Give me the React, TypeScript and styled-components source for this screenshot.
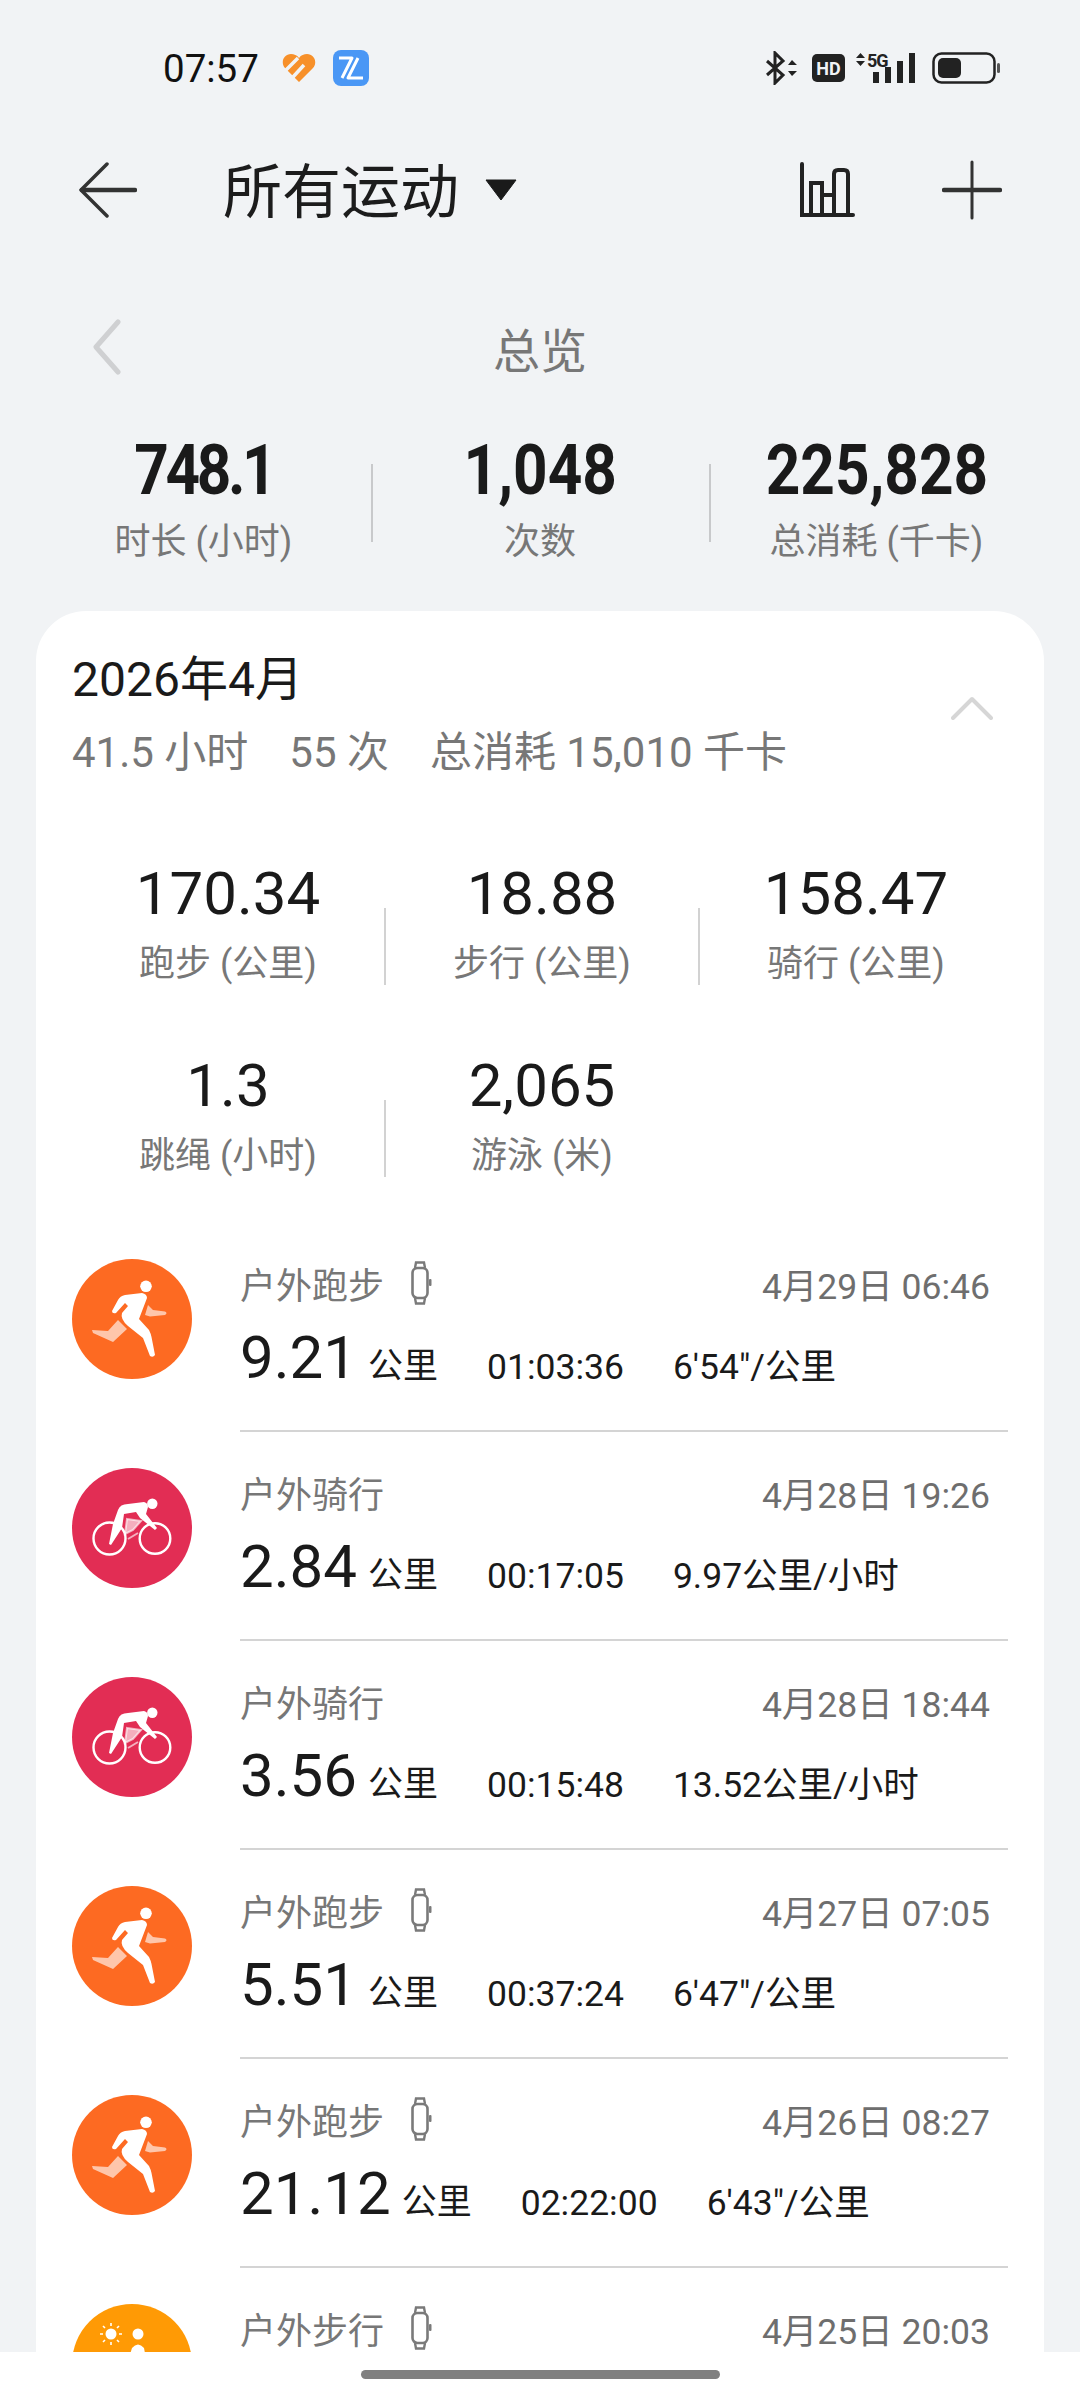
import React from "react";
import styled, { createGlobalStyle } from "styled-components";

type Kind = "run" | "ride" | "walk";

interface Workout {
  kind: Kind;
  title: string;
  date: string;
  distance?: string;
  duration?: string;
  pace?: string;
  watch: boolean;
}

const workouts: Workout[] = [
  { kind: "run", title: "户外跑步", date: "4月29日 06:46", distance: "9.21", duration: "01:03:36", pace: `6'54"/公里`, watch: true },
  { kind: "ride", title: "户外骑行", date: "4月28日 19:26", distance: "2.84", duration: "00:17:05", pace: "9.97公里/小时", watch: false },
  { kind: "ride", title: "户外骑行", date: "4月28日 18:44", distance: "3.56", duration: "00:15:48", pace: "13.52公里/小时", watch: false },
  { kind: "run", title: "户外跑步", date: "4月27日 07:05", distance: "5.51", duration: "00:37:24", pace: `6'47"/公里`, watch: true },
  { kind: "run", title: "户外跑步", date: "4月26日 08:27", distance: "21.12", duration: "02:22:00", pace: `6'43"/公里`, watch: true },
  // last row is cut by the nav bar, only its first line shows
  { kind: "walk", title: "户外步行", date: "4月25日 20:03", watch: true },
];

const monthStats = [
  { value: "170.34", label: "跑步 (公里)" },
  { value: "18.88", label: "步行 (公里)" },
  { value: "158.47", label: "骑行 (公里)" },
  { value: "1.3", label: "跳绳 (小时)" },
  { value: "2,065", label: "游泳 (米)" },
];

const totals = [
  { value: "748.1", label: "时长 (小时)", tight: true },
  { value: "1,048", label: "次数", tight: false },
  { value: "225,828", label: "总消耗 (千卡)", tight: false },
];

const kindColors: Record<Kind, string> = {
  run: "#fd6a22",
  ride: "#e22d54",
  walk: "#ff9a05",
};

const GlobalStyle = createGlobalStyle`
  html, body {
    margin: 0;
    padding: 0;
    background: #f1f3f5;
  }
  body {
    font-family: Roboto, "Noto Sans CJK SC", sans-serif;
    color: #1a1a1a;
  }
`;

const Page = styled.div`
  width: 1080px;
  height: 2400px;
  display: flex;
  flex-direction: column;
  overflow: hidden;
  background: #f1f3f5;
`;

const StatusBar = styled.div`
  height: 136px;
  flex: none;
  display: flex;
  align-items: center;
  padding: 0 80px 0 163px;
  box-sizing: border-box;
`;

const Clock = styled.span`
  font-size: 38.5px;
  color: #111;
  margin-right: 23px;
`;

const StatusIcons = styled.div`
  margin-left: auto;
  display: flex;
  align-items: center;
`;

const StatusIcon = styled.svg<{ $gap?: number }>`
  display: block;
  flex: none;
  margin-left: ${(p) => p.$gap ?? 0}px;
`;

const Header = styled.div`
  height: 108px;
  flex: none;
  display: flex;
  align-items: center;
  padding: 0 78px;
  box-sizing: border-box;
`;

const HeaderTitle = styled.div`
  font-size: 59px;
  line-height: 70px;
  margin: 5px 0 0 86px;
  color: #1c1c1c;
`;

const Caret = styled.svg`
  margin-left: 26px;
  flex: none;
`;

const HeaderActions = styled.div`
  margin-left: auto;
  display: flex;
  align-items: center;
  gap: 87px;
`;

const OverviewBar = styled.div`
  height: 60px;
  margin-top: 73px;
  flex: none;
  display: flex;
  align-items: center;
  justify-content: center;
  position: relative;
  font-size: 47px;
  color: #777;
`;

const PrevButton = styled.svg`
  position: absolute;
  left: 90px;
  top: 2px;
`;

const Totals = styled.div`
  display: grid;
  grid-template-columns: 335px 338px 335px;
  margin: 58px 36px 0;
  flex: none;
`;

const TotalCell = styled.div<{ $divider: boolean }>`
  position: relative;
  display: flex;
  flex-direction: column;
  align-items: center;
  &::before {
    content: "";
    display: ${(p) => (p.$divider ? "block" : "none")};
    position: absolute;
    left: 0;
    top: 29px;
    width: 2px;
    height: 78px;
    background: #c8c9cb;
  }
`;

const TotalValue = styled.div<{ $tight: boolean }>`
  font-size: 71px;
  line-height: 70px;
  font-weight: 700;
  color: #1a1a1a;
  letter-spacing: ${(p) => (p.$tight ? "-4px" : "0")};
  transform: scaleX(0.85);
`;

const TotalLabel = styled.div`
  font-size: 36px;
  line-height: 48px;
  margin-top: 13px;
  color: #777;
`;

const Card = styled.div`
  flex: 1;
  min-height: 0;
  margin: 45px 36px 0;
  background: #fff;
  border-radius: 50px 50px 0 0;
  overflow: hidden;
`;

const MonthHead = styled.div`
  display: flex;
  align-items: center;
  justify-content: space-between;
  padding: 39px 51px 0 36px;
`;

const MonthTitle = styled.div`
  font-size: 48px;
  line-height: 60px;
  color: #1a1a1a;
`;

const MonthSummary = styled.div`
  display: flex;
  gap: 41px;
  margin-top: 17px;
  font-size: 42px;
  line-height: 52px;
  color: #777;
`;

const CollapseIcon = styled.svg`
  flex: none;
  margin-bottom: 14px;
`;

const StatsGrid = styled.div`
  display: grid;
  grid-template-columns: repeat(3, 314px);
  row-gap: 63px;
  margin: 80px 0 0 35px;
`;

const StatCell = styled.div<{ $divider: boolean }>`
  position: relative;
  display: flex;
  flex-direction: column;
  align-items: center;
  &::before {
    content: "";
    display: ${(p) => (p.$divider ? "block" : "none")};
    position: absolute;
    left: -1px;
    top: 49px;
    width: 2px;
    height: 77px;
    background: #d2d2d2;
  }
`;

const StatValue = styled.div`
  font-size: 60px;
  line-height: 70px;
  color: #1a1a1a;
`;

const StatLabel = styled.div`
  font-size: 36px;
  line-height: 48px;
  margin-top: 11px;
  color: #777;
`;

const WorkoutList = styled.div`
  margin-top: 43px;
`;

const Row = styled.div`
  height: 209px;
  display: flex;
  padding-left: 36px;
  box-sizing: border-box;
`;

const Badge = styled.svg`
  width: 120px;
  height: 120px;
  flex: none;
  margin-top: 36px;
`;

const RowBody = styled.div<{ $first: boolean }>`
  flex: 1;
  margin: 0 36px 0 48px;
  padding: 38px 18px 0 0;
  border-top: ${(p) => (p.$first ? "none" : "2px solid #d4d4d4")};
  margin-top: ${(p) => (p.$first ? "0" : "-2px")};
`;

const RowTop = styled.div`
  display: flex;
  align-items: center;
  height: 44px;
  color: #777;
`;

const RowTitle = styled.span`
  font-size: 36px;
`;

const WatchIcon = styled.svg`
  margin-left: 26px;
  flex: none;
`;

const RowDate = styled.span`
  margin-left: auto;
  font-size: 35.5px;
  color: #6e6e6e;
`;

const RowBottom = styled.div`
  display: flex;
  align-items: flex-end;
  margin-top: 18px;
  color: #1a1a1a;
`;

const Distance = styled.span`
  font-size: 60px;
  line-height: 70px;
`;

const Unit = styled.span`
  font-size: 35px;
  line-height: 52px;
  margin-left: 11px;
`;

const Metric = styled.span`
  font-size: 35.5px;
  line-height: 52px;
  margin-left: 49px;
`;

const NavBar = styled.div`
  height: 48px;
  flex: none;
  background: #fff;
  display: flex;
  justify-content: center;
  padding-top: 18px;
  box-sizing: border-box;
`;

const NavPill = styled.div`
  width: 359px;
  height: 9px;
  border-radius: 5px;
  background: #808080;
`;

const HeartIcon = () => (
  <StatusIcon width="34" height="30" viewBox="0 0 34 30">
    <path
      d="M17 29 L3 15 C-2 9 2 1 9 1 C12 1 15 2 17 5 C19 2 22 1 25 1 C32 1 36 9 31 15 Z"
      fill="#f7902a"
    />
    <path d="M4 17 L16 5 M11 24 L22 12" stroke="#f1f3f5" strokeWidth="3.5" fill="none" />
  </StatusIcon>
);

const ZIcon = () => (
  <StatusIcon $gap={17} width="36" height="36" viewBox="0 0 36 36">
    <rect width="36" height="36" rx="8" fill="#4a97f5" />
    <path
      d="M6 8 H19 L9 28 M25 8 L15 28 H30"
      stroke="#fff"
      strokeWidth="3"
      fill="none"
      strokeLinejoin="round"
    />
  </StatusIcon>
);

const BluetoothIcon = () => (
  <StatusIcon width="32" height="34" viewBox="0 0 32 34">
    <path d="M2 10 L18 24 L10 32 V2 L18 10 L2 24" stroke="#222" strokeWidth="3" fill="none" />
    <path d="M23 14 L27 9 L32 14 Z M23 20 L32 20 L27 25 Z" fill="#222" />
  </StatusIcon>
);

const HdIcon = () => (
  <StatusIcon $gap={15} width="33" height="28" viewBox="0 0 33 28">
    <rect width="33" height="28" rx="5" fill="#222" />
    <text x="16.5" y="21" textAnchor="middle" fontSize="18" fontWeight="700" fill="#f1f3f5" fontFamily="Roboto, sans-serif">
      HD
    </text>
  </StatusIcon>
);

const SignalIcon = () => (
  <StatusIcon $gap={10} width="62" height="38" viewBox="0 -3 62 38">
    <path d="M1 6 L5.5 1 L10 6 Z M1 9 H10 L5.5 14 Z" fill="#222" />
    <text x="12" y="15" fontSize="18" fontWeight="700" fill="#222" letterSpacing="-1" fontFamily="Roboto, sans-serif">
      5G
    </text>
    <rect x="18" y="20" width="6" height="11" fill="#222" />
    <rect x="30" y="15" width="6" height="16" fill="#222" />
    <rect x="42" y="9" width="6" height="22" fill="#222" />
    <rect x="54" y="1" width="6" height="30" fill="#222" />
  </StatusIcon>
);

const BatteryIcon = () => (
  <StatusIcon $gap={15} width="68" height="32" viewBox="0 0 68 32">
    <rect x="1.5" y="1.5" width="61" height="29" rx="8" fill="none" stroke="#222" strokeWidth="2.5" />
    <rect x="6" y="6" width="23" height="20" rx="5" fill="#222" />
    <rect x="65" y="11" width="3" height="10" rx="1.5" fill="#555" />
  </StatusIcon>
);

const BadgeArt = ({ kind }: { kind: Kind }) => {
  if (kind === "run") {
    return (
      <>
        <circle cx="74" cy="27.3" r="5.8" fill="#fff" />
        <path
          d="M40 52 L46 41 Q48 37 53 36 L70 34 Q75 35 75 39 L67 60 L77 71 Q79 75 79.5 78 L83 96 Q81 99 78 97 L71 79 L56 67 Q48 60 50 54 L56 47 L53 44 L44 54 Q40 55 40 52 Z"
          fill="#fff"
        />
        <path
          d="M76 46 L81 51 L93 52.5 Q96 54 93 56 L78 57.5 L73 56 Z M20 71 L36 72 L46 61 L55 70 L41 83 L21 74 Z"
          fill="#fff"
          fillOpacity="0.62"
        />
      </>
    );
  }
  if (kind === "ride") {
    return (
      <>
        <circle cx="37.5" cy="70.5" r="16" fill="none" stroke="#fff" strokeWidth="2.4" />
        <circle cx="83" cy="70.5" r="15.3" fill="none" stroke="#fff" strokeWidth="2.4" />
        <circle cx="80.3" cy="35.7" r="5.2" fill="#fff" />
        <path
          d="M46 42 Q48 36 56 36 L72 34 Q76 35 76 39 L74 46 L85 60 L83 62 L68 50 L64 44 L52 46 L50 60 L39 77 L37 76 L41 56 Z"
          fill="#fff"
        />
        <path
          d="M55 51 L69 53 L61 62 L53 66 Z M56 71 L66 65"
          fill="#fff"
          fillOpacity="0.62"
          stroke="#fff"
          strokeOpacity="0.62"
          strokeWidth="2"
        />
      </>
    );
  }
  return (
    <>
      <circle cx="39" cy="30" r="5.5" fill="#fff" />
      <path
        d="M39 19 V22 M39 38 V41 M28 30 H31 M47 30 H50 M31 22 L33 24 M45 36 L47 38 M47 22 L45 24 M33 36 L31 38"
        stroke="#fff"
        strokeWidth="1.6"
      />
      <circle cx="66" cy="30" r="5.5" fill="#fff" />
      <path d="M55 60 L60 44 Q66 37 72 44 L75 60 Z" fill="#fff" />
    </>
  );
};

const WorkoutRow = ({ workout, first }: { workout: Workout; first: boolean }) => (
  <Row>
    <Badge viewBox="0 0 120 120">
      <circle cx="60" cy="60" r="60" fill={kindColors[workout.kind]} />
      <BadgeArt kind={workout.kind} />
    </Badge>
    <RowBody $first={first}>
      <RowTop>
        <RowTitle>{workout.title}</RowTitle>
        {workout.watch && (
          <WatchIcon width="22" height="44" viewBox="0 0 22 44">
            <rect x="2.5" y="7" width="15" height="30" rx="5" fill="none" stroke="#7a7a7a" strokeWidth="2.6" />
            <path d="M5 7 L6 1.5 H14 L15 7 M5 37 L6 42.5 H14 L15 37" fill="none" stroke="#7a7a7a" strokeWidth="2.4" />
            <rect x="19" y="18" width="2.5" height="7" rx="1" fill="#7a7a7a" />
          </WatchIcon>
        )}
        <RowDate>{workout.date}</RowDate>
      </RowTop>
      {workout.distance && (
        <RowBottom>
          <Distance>{workout.distance}</Distance>
          <Unit>公里</Unit>
          <Metric>{workout.duration}</Metric>
          <Metric>{workout.pace}</Metric>
        </RowBottom>
      )}
    </RowBody>
  </Row>
);

const App: React.FC = () => {
  return (
    <Page>
      <GlobalStyle />
      <StatusBar>
        <Clock>07:57</Clock>
        <HeartIcon />
        <ZIcon />
        <StatusIcons>
          <BluetoothIcon />
          <HdIcon />
          <SignalIcon />
          <BatteryIcon />
        </StatusIcons>
      </StatusBar>

      <Header>
        <svg width="59" height="56" viewBox="0 0 59 56">
          <path d="M57 28 H4" stroke="#333" strokeWidth="4.5" strokeLinecap="round" fill="none" />
          <path
            d="M29 2 L3 28 L29 54"
            stroke="#333"
            strokeWidth="3.5"
            strokeLinecap="round"
            strokeLinejoin="round"
            fill="none"
          />
        </svg>
        <HeaderTitle>所有运动</HeaderTitle>
        <Caret width="32" height="22" viewBox="0 0 32 22">
          <path d="M1 1 H31 L16 21 Z" fill="#1a1a1a" stroke="#1a1a1a" strokeLinejoin="round" />
        </Caret>
        <HeaderActions>
          <svg width="55" height="56" viewBox="0 0 55 56">
            <path
              d="M2 2 V53 H53 M11 53 V21 H22 V53 M34 53 V12 Q34 8 38 8 H44 Q48 8 48 12 V53 M22 33 H34"
              stroke="#222"
              strokeWidth="4"
              strokeLinecap="round"
              fill="none"
            />
          </svg>
          <svg width="60" height="60" viewBox="0 0 60 60">
            <path d="M30 2 V58" stroke="#333" strokeWidth="3" strokeLinecap="round" fill="none" />
            <path d="M2 30 H58" stroke="#333" strokeWidth="4.5" strokeLinecap="round" fill="none" />
          </svg>
        </HeaderActions>
      </Header>

      <OverviewBar>
        <PrevButton width="32" height="56" viewBox="0 0 32 56">
          <path
            d="M28 3 L6 28 L28 53"
            stroke="#cfd0d2"
            strokeWidth="5"
            strokeLinecap="round"
            strokeLinejoin="round"
            fill="none"
          />
        </PrevButton>
        总览
      </OverviewBar>

      <Totals>
        {totals.map((item, i) => (
          <TotalCell key={item.label} $divider={i > 0}>
            <TotalValue $tight={item.tight}>{item.value}</TotalValue>
            <TotalLabel>{item.label}</TotalLabel>
          </TotalCell>
        ))}
      </Totals>

      <Card>
        <MonthHead>
          <div>
            <MonthTitle>2026年4月</MonthTitle>
            <MonthSummary>
              <span>41.5 小时</span>
              <span>55 次</span>
              <span>总消耗 15,010 千卡</span>
            </MonthSummary>
          </div>
          <CollapseIcon width="42" height="24" viewBox="0 0 42 24">
            <path
              d="M2 22 L21 3 L40 22"
              stroke="#d6d6d6"
              strokeWidth="4"
              strokeLinecap="round"
              strokeLinejoin="round"
              fill="none"
            />
          </CollapseIcon>
        </MonthHead>

        <StatsGrid>
          {monthStats.map((stat, i) => (
            <StatCell key={stat.label} $divider={i % 3 !== 0}>
              <StatValue>{stat.value}</StatValue>
              <StatLabel>{stat.label}</StatLabel>
            </StatCell>
          ))}
        </StatsGrid>

        <WorkoutList>
          {workouts.map((workout, i) => (
            <WorkoutRow key={workout.date} workout={workout} first={i === 0} />
          ))}
        </WorkoutList>
      </Card>

      <NavBar>
        <NavPill />
      </NavBar>
    </Page>
  );
};

export default App;
